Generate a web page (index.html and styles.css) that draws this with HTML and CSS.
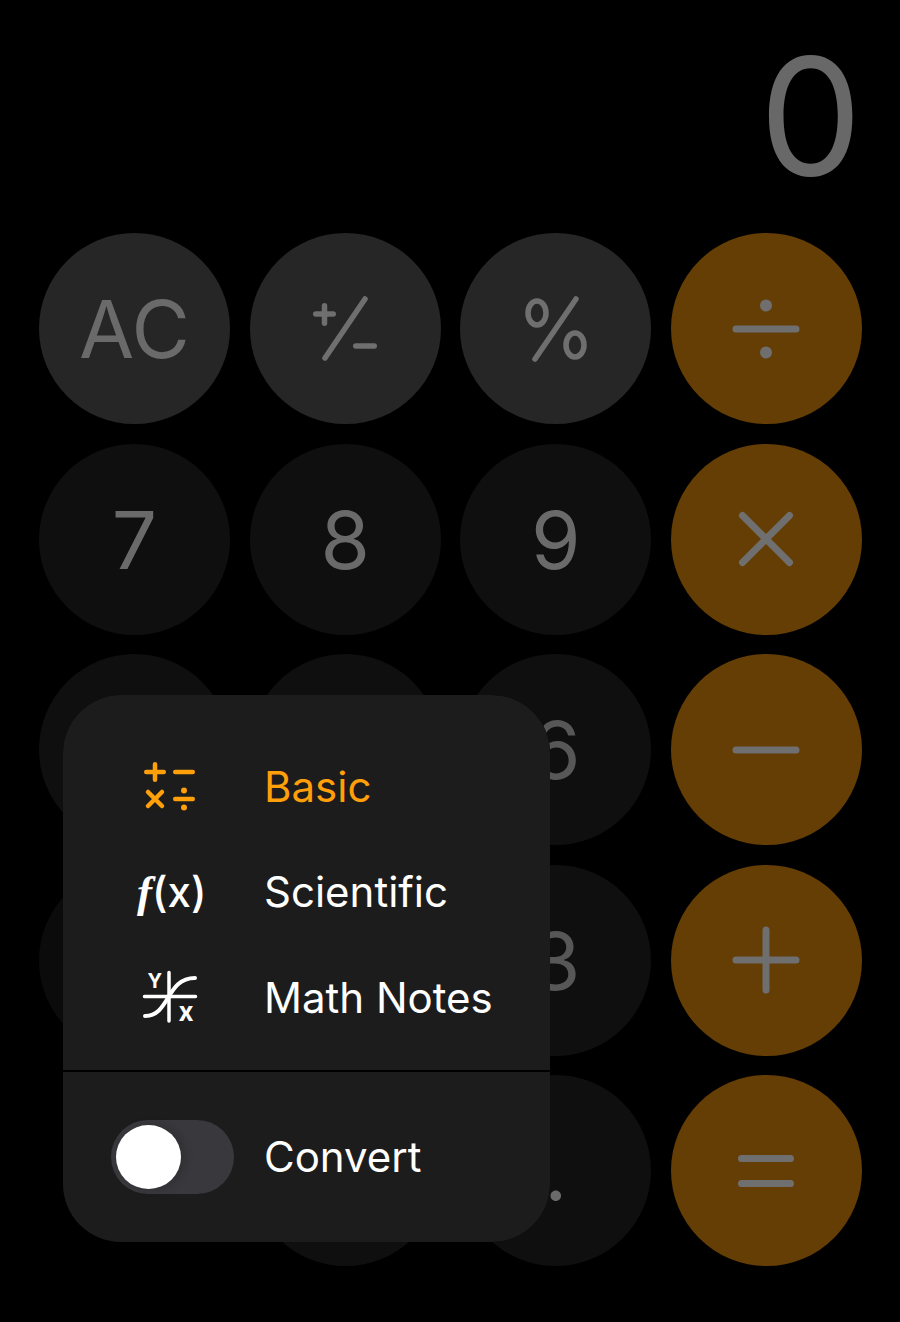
FILE: index.html
```html
<!DOCTYPE html>
<html lang="en">
<head>
    <meta charset="UTF-8">
    <meta name="viewport" content="width=device-width, initial-scale=1.0">
    <title>Calculator</title>
    <link rel="stylesheet" href="styles.css">
</head>
<body>

    <main class="calc">
        <div class="display">0</div>

        <div class="keys">
            <div class="key fn">AC</div>
            <div class="key fn">
                <svg class="icon thin" viewBox="0 0 70 70"><path d="M5.750 20H23.250M14.500 11.750V29.250M55 5 15 64M45.750 52H64.250"/></svg>
            </div>
            <div class="key fn">
                <svg class="icon thin" viewBox="0 0 70 70"><ellipse cx="16" cy="19" rx="9" ry="12"/><ellipse cx="54" cy="51" rx="9" ry="12"/><path d="M55 5 14 65"/></svg>
            </div>
            <div class="key op">
                <svg class="icon" viewBox="0 0 70 70"><path d="M5 35H65"/><circle class="dot" cx="35" cy="11.500" r="6"/><circle class="dot" cx="35" cy="58.500" r="6"/></svg>
            </div>

            <div class="key num">7</div>
            <div class="key num">8</div>
            <div class="key num">9</div>
            <div class="key op">
                <svg class="icon" viewBox="0 0 70 70"><path d="M11.500 11.500 58.500 58.500M58.500 11.500 11.500 58.500"/></svg>
            </div>

            <!-- 4 and 5 sit behind the menu -->
            <div class="key num"></div>
            <div class="key num"></div>
            <div class="key num faded">6</div>
            <div class="key op">
                <svg class="icon" viewBox="0 0 70 70"><path d="M5 35H65"/></svg>
            </div>

            <div class="key num far"></div>
            <div class="key num"></div>
            <div class="key num faded">3</div>
            <div class="key op">
                <svg class="icon" viewBox="0 0 70 70"><path d="M5 35H65M35 5V65"/></svg>
            </div>

            <div class="key blank"></div>
            <div class="key num"></div>
            <div class="key num">.</div>
            <div class="key op">
                <svg class="icon" viewBox="0 0 70 70"><path d="M10.500 22.500H59.500M10.500 47.500H59.500"/></svg>
            </div>
        </div>
    </main>

    <div class="menu">
        <div class="menu-list">
            <div class="menu-row selected">
                <svg class="menu-icon" viewBox="0 0 54 52">
                    <path d="M3.250 12H20.750M12 4.250V19.750M32.250 12H49.750M5 32 19 46M19 32 5 46M32.250 39H49.750"/>
                    <circle class="fill" cx="41" cy="30.500" r="3"/>
                    <circle class="fill" cx="41" cy="47.500" r="3"/>
                </svg>
                <span class="label">Basic</span>
            </div>
            <div class="menu-row">
                <span class="fx"><i>f</i>(x)</span>
                <span class="label">Scientific</span>
            </div>
            <div class="menu-row">
                <svg class="menu-icon" viewBox="0 0 54 52">
                    <path class="axis" d="M1.500 25.500H52.500M26 1.500V50"/>
                    <path class="curve" d="M2 45C27 45 23 7 52 7"/>
                    <text class="axis-y" x="4.500" y="17">Y</text>
                    <text class="axis-x" x="35.500" y="50">x</text>
                </svg>
                <span class="label">Math Notes</span>
            </div>
        </div>
        <div class="menu-foot">
            <div class="toggle"><div class="knob"></div></div>
            <span class="label">Convert</span>
        </div>
    </div>

</body>
</html>
```

FILE: styles.css
```css
* {
    box-sizing: border-box;
}
html, body {
    margin: 0;
    height: 100%;
    background: #000;
}
body {
    position: relative;
    width: 900px;
    height: 1322px;
    overflow: hidden;
    font-family: Inter, "Liberation Sans", sans-serif;
}
.calc {
    padding: 0 38px 0 39px;
}
.display {
    height: 233px;
    padding-top: 16px;
    padding-right: 0;
    text-align: right;
    color: #686868;
    font-size: 163px;
    font-weight: 430;
    line-height: 200px;
}
.keys {
    display: grid;
    grid-template-columns: repeat(4, 191px);
    grid-auto-rows: 191px;
    column-gap: 19.67px;
    row-gap: 19.5px;
}
.key {
    display: flex;
    align-items: center;
    justify-content: center;
    border-radius: 50%;
    color: #6a6a6a;
    font-size: 80px;
    font-weight: 400;
}
.fn {
    background: #262626;
}
.num {
    background: #0f0f0f;
}
.num.far {
    background: #0b0b0b;
}
.num.faded {
    color: #575757;
}
.op {
    background: #653e05;
}
.blank {
    background: transparent;
}
.icon {
    width: 70px;
    height: 70px;
    fill: none;
    stroke: #6f6f70;
    stroke-width: 7;
    stroke-linecap: round;
}
.icon.thin {
    stroke-width: 5.5;
}
.icon .dot {
    fill: #6f6f70;
    stroke: none;
}

/* popup over the keys */
.menu {
    position: absolute;
    left: 63px;
    top: 695px;
    width: 487px;
    height: 547px;
    border-radius: 58px;
    overflow: hidden;
    background: #000;
    color: #fff;
    font-size: 42px;
}
.menu-list {
    height: 375px;
    padding-top: 38.5px;
    background: #1c1c1c;
}
.menu-row {
    display: flex;
    align-items: center;
    height: 105.5px;
    padding-left: 80px;
}
.menu-row .label {
    margin-left: 67px;
}
.menu-row.selected {
    color: #ff9f0a;
}
.menu-icon {
    width: 54px;
    height: 52px;
    overflow: visible;
    fill: none;
    stroke: currentColor;
    stroke-width: 4.5;
    stroke-linecap: round;
}
.menu-icon .fill {
    fill: currentColor;
    stroke: none;
}
.menu-icon .axis {
    stroke-width: 3.5;
}
.menu-icon .curve {
    stroke-width: 4;
}
.menu-icon text {
    fill: currentColor;
    stroke: none;
    font-weight: 700;
}
.axis-y {
    font-size: 20px;
}
.axis-x {
    font-size: 26px;
}
.fx {
    width: 66px;
    margin-left: -6px;
    margin-right: -6px;
    font-size: 42px;
    font-weight: 500;
    white-space: nowrap;
}
.fx i {
    font-family: "Liberation Serif", serif;
    font-size: 45px;
    font-weight: 700;
}
.menu-foot {
    display: flex;
    align-items: center;
    height: 170px;
    margin-top: 2px;
    padding-left: 48px;
    padding-bottom: 1px;
    background: #1c1c1c;
}
.menu-foot .label {
    margin-left: 30px;
}
.toggle {
    width: 123px;
    height: 74px;
    padding: 5px 4.5px;
    border-radius: 37px;
    background: #39393d;
}
.knob {
    width: 65px;
    height: 64px;
    border-radius: 50%;
    background: #fff;
    box-shadow: 4px 0 10px rgba(0, 0, 0, 0.18);
}
```
